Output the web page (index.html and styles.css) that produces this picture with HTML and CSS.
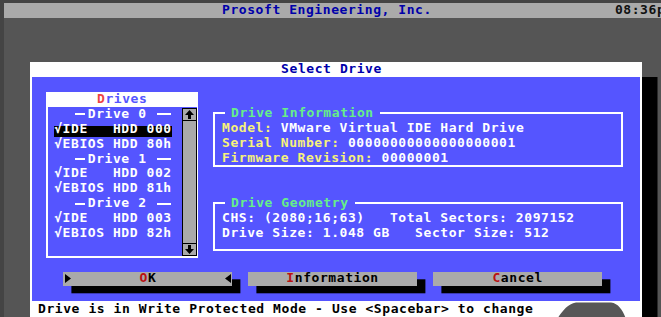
FILE: index.html
```html
<!DOCTYPE html>
<html lang="en">
<head>
  <meta charset="UTF-8" />
  <title>Select Drive</title>
  <link rel="stylesheet" href="styles.css">
</head>
<body>
  <div class="screen">
    <div class="topbar">
      <span class="topbar-title">Prosoft Engineering, Inc.</span>
      <span class="clock">08:36p</span>
    </div>

    <div class="dialog">
      <div class="dialog-title">Select Drive</div>

      <div class="dialog-body">
        <div class="panes">
          <div class="drive-list">
            <div class="list-title"><span class="hot">D</span>rives</div>
            <div class="list-inner">
              <ul class="items">
                <li class="group">Drive 0</li>
                <li><span class="selected">√IDE   HDD 000</span></li>
                <li>√EBIOS HDD 80h</li>
                <li class="group">Drive 1</li>
                <li>√IDE   HDD 002</li>
                <li>√EBIOS HDD 81h</li>
                <li class="group">Drive 2</li>
                <li>√IDE   HDD 003</li>
                <li>√EBIOS HDD 82h</li>
              </ul>
              <div class="scrollbar">
                <div class="scroll-btn">
                  <svg width="11" height="11" viewBox="0 0 11 11"><path d="M5.5 1 L10 6 H7 V10 H4 V6 H1 Z" fill="#000"/></svg>
                </div>
                <div class="scroll-track"></div>
                <div class="scroll-btn">
                  <svg width="11" height="11" viewBox="0 0 11 11"><path d="M5.5 10 L10 5 H7 V1 H4 V5 H1 Z" fill="#000"/></svg>
                </div>
              </div>
            </div>
          </div>

          <div class="info">
            <fieldset class="box box-info">
              <legend>Drive Information</legend>
              <div class="line"><span class="label">Model:</span> VMware Virtual IDE Hard Drive</div>
              <div class="line"><span class="label">Serial Number:</span> 00000000000000000001</div>
              <div class="line"><span class="label">Firmware Revision:</span> 00000001</div>
            </fieldset>
            <fieldset class="box box-geometry">
              <legend>Drive Geometry</legend>
              <div class="line">CHS: (2080;16;63)   Total Sectors: 2097152</div>
              <div class="line">Drive Size: 1.048 GB   Sector Size: 512</div>
            </fieldset>
          </div>
        </div>

        <div class="buttons">
          <div class="btn btn-focus">
            <svg class="mark" width="6" height="9" viewBox="0 0 6 9"><path d="M0 0 L6 4.5 L0 9 Z" fill="#000"/></svg>
            <span><span class="hot">O</span>K</span>
            <svg class="mark" width="6" height="9" viewBox="0 0 6 9"><path d="M6 0 L0 4.5 L6 9 Z" fill="#000"/></svg>
          </div>
          <div class="btn"><span class="hot">I</span>nformation</div>
          <div class="btn"><span class="hot">C</span>ancel</div>
        </div>
      </div>

      <div class="status">Drive is in Write Protected Mode - Use &lt;Spacebar&gt; to change<svg class="blob" width="70" height="18" viewBox="0 0 70 18"><path d="M0 18 C5 11 10 3 19 1.5 L54 1.5 C62 2.5 66 10 69 18 Z" fill="#575757"/></svg></div>
    </div>
  </div>
</body>
</html>
```

FILE: styles.css
```css
* {
  box-sizing: border-box;
}

html, body {
  margin: 0;
}

body {
  width: 661px;
  height: 317px;
  overflow: hidden;
  padding: 3px 0 0 4px;
  background-color: #444444;
  font-family: "DejaVu Sans Mono", monospace;
  font-weight: bold;
  font-size: 13px;
  letter-spacing: 0.57px;
  line-height: 14.9px;
  white-space: nowrap;
  color: #ffffff;
}

.screen {
  width: 680px;
  height: 330px;
  background-color: #555555;
}

/* top status bar */
.topbar {
  display: flex;
  height: 14.9px;
  background-color: #aaaaaa;
  color: #0000aa;
}

.topbar-title {
  padding-left: 218px;
}

.clock {
  margin-left: 183px;
  color: #111111;
}

/* dialog */
.dialog {
  position: relative;
  width: 612px;
  margin: 44.2px 0 0 25.5px;
  background-color: #ffffff;
  box-shadow: 15.5px 15px 0 #000000;
}

.dialog-title {
  height: 15.2px;
  padding-right: 8px;
  text-align: center;
  color: #0000aa;
}

.dialog-body {
  height: 223.4px;
  margin: 0 2px;
  padding: 14.7px 0 0 14.7px;
  background-color: #5555ff;
}

.panes {
  display: flex;
  height: 166.3px;
}

/* drive list */
.drive-list {
  width: 152px;
}

.list-title {
  height: 14.9px;
  background-color: #ffffff;
  color: #5555ff;
  text-align: center;
}

.hot {
  color: #cc2222;
}

.list-title .hot {
  color: #ee4444;
}

.list-inner {
  display: flex;
  height: 151.4px;
  border-left: 2px solid #ffffff;
  border-right: 1.5px solid #ffffff;
  border-bottom: 2px solid #ffffff;
}

.items {
  list-style: none;
  margin: 0;
  padding: 0 0 0 6px;
}

.items li {
  height: 14.9px;
  white-space: pre;
}

.selected {
  display: inline-block;
  height: 14.9px;
  background: linear-gradient(transparent 4.3px, #000000 4.3px);
}

.group {
  display: flex;
  align-items: center;
  padding-left: 21px;
}

.group::before,
.group::after {
  content: "";
  height: 2px;
  background-color: #ffffff;
}

.group::before {
  width: 10px;
  margin-right: 2.6px;
}

.group::after {
  width: 14px;
  margin-left: 10px;
}

.scrollbar {
  display: flex;
  flex-direction: column;
  width: 15px;
  margin: 1.3px 0 0 auto;
  border: 1px solid #000000;
  background-color: #aaaaaa;
}

.scroll-btn {
  display: flex;
  align-items: center;
  justify-content: center;
  height: 13px;
  border: 1px solid #000000;
  margin: -1px;
}

.scroll-track {
  flex: 1;
}

/* info boxes */
.info {
  width: 410px;
  margin-left: 15.3px;
}

.box {
  margin: 0;
  min-width: 0;
  border: 2px solid #ffffff;
  padding: 0 0 0 6.5px;
}

.box legend {
  margin-left: 3px;
  padding: 0 6px;
  color: #66ee88;
}

.box-info {
  margin-top: 13.9px;
}

.box-geometry {
  margin-top: 28.4px;
  padding-bottom: 8.5px;
}

.line {
  height: 14.9px;
  white-space: pre;
}

.label {
  color: #f7f27a;
}

/* buttons */
.buttons {
  display: flex;
  gap: 16.7px;
  margin-top: 13.4px;
  padding-left: 17.1px;
}

.btn {
  display: flex;
  align-items: center;
  justify-content: center;
  width: 168.4px;
  height: 14.3px;
  background-color: #aaaaaa;
  color: #000000;
  box-shadow: 8.4px 7.3px 0 #000000;
}

.btn .hot {
  color: #bb1111;
}

.btn-focus {
  justify-content: space-between;
  padding: 0 1px 0 2px;
}

/* bottom status line */
.status {
  position: relative;
  height: 18px;
  padding: 1px 0 0 8.5px;
  color: #000000;
  background-color: #ffffff;
}

.blob {
  position: absolute;
  left: 527px;
  top: 0;
}
```
